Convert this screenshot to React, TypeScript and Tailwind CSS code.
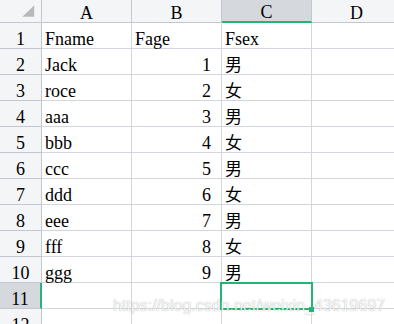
import React from 'react'

const rows: [string, string, string][] = [
    ['Fname', 'Fage', 'Fsex'],
    ['Jack', '1', '男'],
    ['roce', '2', '女'],
    ['aaa', '3', '男'],
    ['bbb', '4', '女'],
    ['ccc', '5', '男'],
    ['ddd', '6', '女'],
    ['eee', '7', '男'],
    ['fff', '8', '女'],
    ['ggg', '9', '男'],
    ['', '', ''],
    ['', '', ''],
]

const serif = "font-['Liberation_Serif',serif]"

export default function App() {
    return (
        <div className="relative w-[394px] h-[324px] overflow-hidden bg-white text-black">
            <div className="grid grid-cols-[42px_90px_90px_90px_90px]">
                {/* Header row */}
                <div className="h-[23px] bg-[#f4f5f7] border-r border-b border-[#c3c7d0] flex">
                    <svg width="42" height="22" viewBox="0 0 42 22">
                        <polygon points="35,5 35,17 23,17" fill="#b8b9bb" />
                    </svg>
                </div>
                {['A', 'B', 'C', 'D'].map((c) => (
                    <div
                        key={c}
                        className={`h-[23px] flex items-end justify-center border-r text-[18px] leading-[18px] ${serif} ${
                            c === 'C'
                                ? 'bg-[#d5d8dd] border-[#c3c7d0] border-b-2 border-b-[#22b573]'
                                : 'bg-[#f4f5f7] border-[#c3c7d0] border-b'
                        }`}
                    >
                        {c}
                    </div>
                ))}

                {/* Data rows */}
                {rows.map((r, i) => (
                    <React.Fragment key={i}>
                        <div
                            className={`h-[26px] flex items-end justify-center border-b text-[18px] leading-[18px] ${serif} ${
                                i === 10
                                    ? 'bg-[#d5d8dd] border-[#c3c7d0] border-r-2 border-r-[#22b573]'
                                    : 'bg-[#f4f5f7] border-[#c3c7d0] border-r'
                            }`}
                        >
                            {i + 1}
                        </div>
                        <div className={`h-[26px] flex items-end pl-[3px] border-r border-b border-[#d3d6dd] text-[18px] leading-[18px] ${serif}`}>
                            {r[0]}
                        </div>
                        <div
                            className={`h-[26px] flex items-end border-r border-b border-[#d3d6dd] text-[18px] leading-[18px] ${serif} ${
                                i === 0 ? 'pl-[3px]' : 'justify-end pr-[10px]'
                            }`}
                        >
                            {r[1]}
                        </div>
                        <div
                            className={`h-[26px] flex items-end pl-[3px] border-r border-b border-[#d3d6dd] leading-[18px] ${
                                i === 0 ? `text-[18px] ${serif}` : "text-[17px] pb-[1px] font-['Noto_Sans_CJK_SC',sans-serif]"
                            }`}
                        >
                            {r[2]}
                        </div>
                        <div className="h-[26px] border-r border-b border-[#d3d6dd]"></div>
                    </React.Fragment>
                ))}
            </div>

            {/* Selected cell C11 */}
            <div className="absolute left-[220px] top-[282px] w-[93px] h-[28px] border-2 border-[#22b573]"></div>
            <div className="absolute left-[309px] top-[307px] w-[5px] h-[5px] bg-[#22b573]"></div>

            {/* Watermark */}
            <div className="absolute left-[113px] top-[298px] text-[16px] leading-[16px] font-['Liberation_Sans',sans-serif] text-white/90 [text-shadow:0_0_1px_rgba(0,0,0,0.4)] whitespace-nowrap">
                https://blog.csdn.net/weixin_43619697
            </div>
        </div>
    )
}
